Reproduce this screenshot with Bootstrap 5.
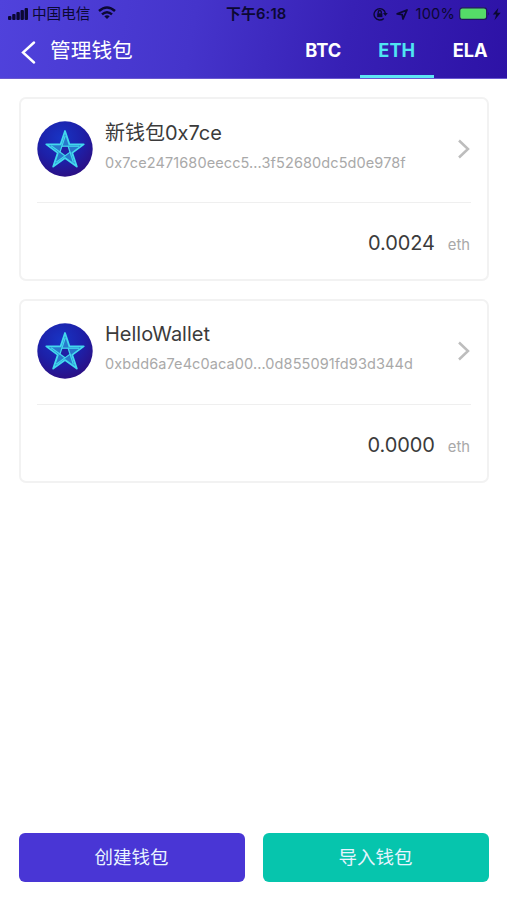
<!DOCTYPE html>
<html lang="zh-CN">
<head>
<meta charset="utf-8">
<meta name="viewport" content="width=device-width, initial-scale=1">
<title>管理钱包</title>
<link href="https://cdn.jsdelivr.net/npm/bootstrap@5.3.0/dist/css/bootstrap.min.css" rel="stylesheet">
<style>
body{font-family:Inter,"Noto Sans CJK SC",sans-serif;color:#3b3b3b;height:900px;overflow:hidden}
svg{display:block;flex:none}
.app-header{height:79px;background:linear-gradient(100deg,#5042dc 0%,#4534cb 38%,#3720b5 68%,#2d12a6 100%);border-bottom:1px solid #6a58d0}
.status{height:28px;color:#0b0833;font-size:14.6px;line-height:28px;padding:0 5px 0 8px}
.carrier{margin-left:4px;margin-right:8px}
.clock{left:226px;top:0;font-weight:600;font-size:14.8px;letter-spacing:.15px}
.percent{letter-spacing:.2px}
.titlebar{height:50px;padding-left:20px}
.back-icon{margin-top:12px}
.title-text{font-size:20.7px;line-height:46px;margin-left:14px}
.tabs-top .nav-link{width:73.5px;height:50px;padding:0;text-align:center;line-height:45px;font-weight:700;font-size:18.2px;color:#fff}
.tabs-top .nav-link.active{color:#4fe5f2;box-shadow:inset 0 -3px #5de6f4}
main{padding:18px 18px 0 19px}
.wallet{height:184px;border:2px solid #f2f2f2;border-radius:7px;padding:0 16px;margin-bottom:17.5px}
.wallet-top{height:104px;border-bottom:1px solid #efefef;padding-bottom:3px}
.wallet-name{font-size:20px;line-height:26px}
.wallet-address{font-size:14.5px;letter-spacing:.1px;line-height:20px;color:#a9a9a9;margin-top:7px;white-space:nowrap}
.wallet-info{margin-left:12px;margin-top:-6px}
.wallet-bottom{height:80px;padding:26px 1px 0 0}
.amount{font-size:20px;letter-spacing:-.1px;line-height:28px}
.unit{font-size:14.8px;color:#a9a9a9;margin-left:13px}
.actions{padding:0 18px 18px 19px;gap:18px}
.actions .btn{height:49px;border:0;border-radius:6px;font-size:18.5px;color:#e8f4ff;padding:0 1px 0 0}
.create{background:#4936d5!important}
.import{background:#06c5ad!important}
</style>
</head>
<body class="d-flex flex-column bg-white">
<svg width="0" height="0" class="position-absolute" aria-hidden="true">
<defs>
<radialGradient id="orb" cx=".42" cy=".3" r=".75"><stop offset="0" stop-color="#1834c4"/><stop offset=".55" stop-color="#1d20a8"/><stop offset="1" stop-color="#2d0d80"/></radialGradient>
<path id="strand" d="M24.4 25.2H42"/>
<symbol id="star" viewBox="0 0 56 56">
<circle cx="28" cy="28" r="27.7" fill="url(#orb)"/>
<path d="M28 10 32.4 23.4H46.7L35.2 31.9 39.8 45.6 28 37.1 16.2 45.6 20.8 31.9 9.3 23.4H23.6Z" fill="#2878cc" stroke="#42d9ed" stroke-width="1.8" stroke-linejoin="round"/>
<path d="M28 34.8 33 31.1 31.1 25.2H24.9L23 31.1Z" fill="#211fa4"/>
<g fill="none" stroke="#42d9ed" stroke-width="1.2"><use href="#strand"/><use href="#strand" transform="rotate(72 28 29.5)"/><use href="#strand" transform="rotate(144 28 29.5)"/><use href="#strand" transform="rotate(216 28 29.5)"/><use href="#strand" transform="rotate(288 28 29.5)"/></g>
</symbol>
</defs>
</svg>
<header class="app-header">
<div class="status d-flex align-items-center position-relative">
<svg width="20" height="12" viewBox="0 0 20 12" fill="#0b0833"><rect y="8" width="3.4" height="4" rx="1"/><rect x="4.2" y="6" width="3.4" height="6" rx="1"/><rect x="8.4" y="4" width="3.4" height="8" rx="1"/><rect x="12.5" y="2" width="3.4" height="10" rx="1"/><rect x="16.6" y="0" width="3.4" height="12" rx="1"/></svg>
<span class="carrier">中国电信</span>
<svg class="mb-1" width="18" height="13" viewBox="0 0 18 13" fill="none" stroke="#0b0833" stroke-width="2.5"><path d="M1 5Q9-2 17 5M4 8.4Q9 4 14 8.4"/><path d="M6.3 10.3Q9 8.2 11.7 10.3L9 13Z" fill="#0b0833" stroke="none"/></svg>
<span class="clock position-absolute">下午6:18</span>
<div class="d-flex align-items-center ms-auto">
<svg width="15" height="14" viewBox="0 0 15 14" fill="none" stroke="#0b0833" stroke-width="1.4"><path d="M10.8 11.4A5.7 5.7 0 1 1 12.4 6.4"/><path d="M10 6h4.8l-2.4 3z" fill="#0b0833" stroke="none"/><rect x="4.2" y="6.3" width="5.2" height="3.8" fill="#0b0833" stroke="none"/><path d="M5.3 6.5V5a1.5 1.5 0 0 1 3 0v1.5"/></svg>
<svg class="ms-2" width="12" height="11" viewBox="0 0 12 11" fill="none" stroke="#0b0833" stroke-width="1.8" stroke-linejoin="round"><path d="M11 1 7 10 6.2 5.6 1.2 4.8Z"/></svg>
<span class="percent ms-2">100%</span>
<svg class="ms-1" width="43" height="14" viewBox="0 0 43 14"><rect x=".7" y=".8" width="27" height="11.6" rx="2.7" fill="#55dc68" stroke="#21145f" stroke-width="1.2"/><path d="M29.2 4.6v4q1.8-2 0-4" fill="#21145f"/><path d="M39.3 1 33.8 7.6h3.4l-1.7 5.6 6.2-7.4h-3.5z" fill="#0b0833"/></svg>
</div>
</div>
<div class="titlebar d-flex">
<svg class="back-icon" width="16" height="24" viewBox="0 0 16 24"><path d="M14 2.5 3 12.5 14 22.5" fill="none" stroke="#fff" stroke-width="2.4" stroke-linecap="round"/></svg>
<span class="title-text text-white">管理钱包</span>
<nav class="nav tabs-top ms-auto flex-nowrap">
<a class="nav-link" href="#">BTC</a><a class="nav-link active" href="#">ETH</a><a class="nav-link" href="#">ELA</a>
</nav>
</div>
</header>
<main class="flex-grow-1">
<section class="wallet">
<div class="wallet-top d-flex align-items-center">
<svg width="56" height="56"><use href="#star"/></svg>
<div class="wallet-info"><div class="wallet-name">新钱包0x7ce</div><div class="wallet-address">0x7ce2471680eecc5...3f52680dc5d0e978f</div></div>
<svg class="ms-auto" width="14" height="20" viewBox="0 0 14 20"><path d="M2 1.5 11 10 2 18.5" fill="none" stroke="#bdbdbd" stroke-width="2.5"/></svg>
</div>
<div class="wallet-bottom d-flex justify-content-end align-items-baseline"><span class="amount">0.0024</span><span class="unit">eth</span></div>
</section>
<section class="wallet">
<div class="wallet-top d-flex align-items-center">
<svg width="56" height="56"><use href="#star"/></svg>
<div class="wallet-info"><div class="wallet-name">HelloWallet</div><div class="wallet-address">0xbdd6a7e4c0aca00...0d855091fd93d344d</div></div>
<svg class="ms-auto" width="14" height="20" viewBox="0 0 14 20"><path d="M2 1.5 11 10 2 18.5" fill="none" stroke="#bdbdbd" stroke-width="2.5"/></svg>
</div>
<div class="wallet-bottom d-flex justify-content-end align-items-baseline"><span class="amount">0.0000</span><span class="unit">eth</span></div>
</section>
</main>
<footer class="actions d-flex">
<button class="btn create flex-fill w-50" type="button">创建钱包</button>
<button class="btn import flex-fill w-50" type="button">导入钱包</button>
</footer>
<script src="https://cdn.jsdelivr.net/npm/bootstrap@5.3.0/dist/js/bootstrap.bundle.min.js"></script>
</body>
</html>
